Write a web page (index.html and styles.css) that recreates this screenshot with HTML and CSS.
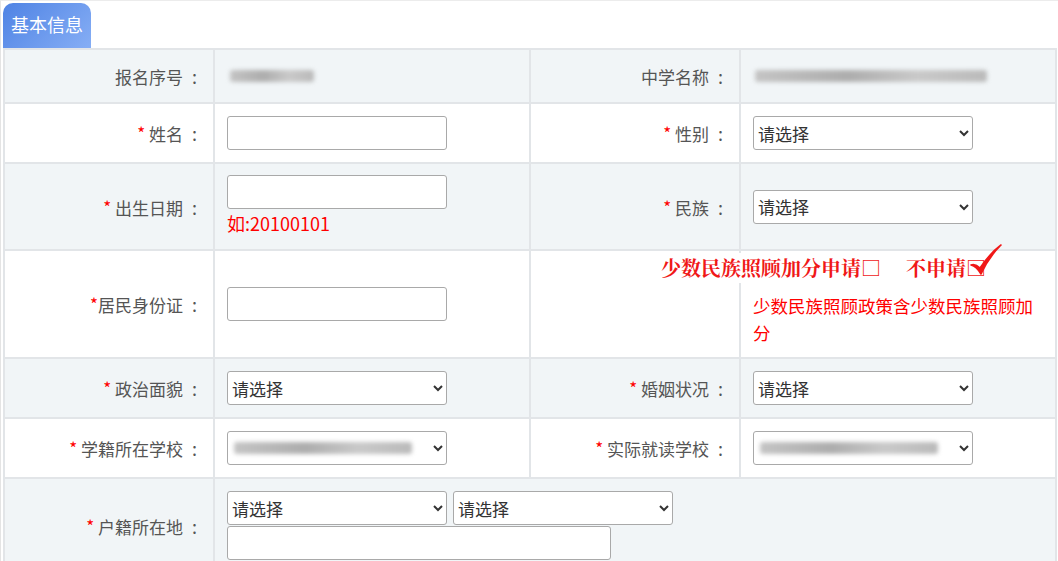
FILE: index.html
```html
<!DOCTYPE html>
<html lang="zh-CN">
<head>
    <meta charset="UTF-8">
    <meta name="viewport" content="width=device-width, initial-scale=1.0">
    <title>基本信息</title>
    <link rel="stylesheet" href="styles.css">
</head>
<body>
    <div class="panel">
        <div class="tab">基本信息</div>
        <table class="info-table">
            <colgroup>
                <col class="col-label">
                <col class="col-value">
                <col class="col-label">
                <col class="col-value">
            </colgroup>
            <tr class="row-grey row-54">
                <td class="label">报名序号<span class="colon">:</span></td>
                <td><span class="blur blur-short"></span></td>
                <td class="label">中学名称<span class="colon">:</span></td>
                <td><span class="blur blur-long"></span></td>
            </tr>
            <tr class="row-60">
                <td class="label"><span class="req">*</span> 姓名<span class="colon">:</span></td>
                <td><input class="field" type="text"></td>
                <td class="label"><span class="req">*</span> 性别<span class="colon">:</span></td>
                <td><select class="field"><option>请选择</option></select></td>
            </tr>
            <tr class="row-grey row-87">
                <td class="label"><span class="req">*</span> 出生日期<span class="colon">:</span></td>
                <td class="top-cell">
                    <input class="field" type="text">
                    <div class="hint">如:20100101</div>
                </td>
                <td class="label"><span class="req">*</span> 民族<span class="colon">:</span></td>
                <td><select class="field"><option>请选择</option></select></td>
            </tr>
            <tr class="row-108">
                <td class="label"><span class="req">*</span>居民身份证<span class="colon">:</span></td>
                <td><input class="field" type="text"></td>
                <td class="label"></td>
                <td class="ethnic-cell">
                    <div class="ethnic-apply">少数民族照顾加分申请□<span class="gap"></span>不申请□
                        <svg class="tick" width="32" height="38" viewBox="0 0 32 38">
                            <path d="M1 21 C5 22 8 25 11 30 C16 19 23 9 31 1 C23 7 16 15 10 24 C7 21 4 20 1 21 Z" fill="#f01818" stroke="#f01818" stroke-width="1.6" stroke-linejoin="round"/>
                        </svg>
                    </div>
                    <div class="note">少数民族照顾政策含少数民族照顾加分</div>
                </td>
            </tr>
            <tr class="row-grey row-60">
                <td class="label"><span class="req">*</span> 政治面貌<span class="colon">:</span></td>
                <td><select class="field"><option>请选择</option></select></td>
                <td class="label"><span class="req">*</span> 婚姻状况<span class="colon">:</span></td>
                <td><select class="field"><option>请选择</option></select></td>
            </tr>
            <tr class="row-60">
                <td class="label"><span class="req">*</span> 学籍所在学校<span class="colon">:</span></td>
                <td>
                    <div class="select-wrap">
                        <select class="field"><option></option></select>
                        <span class="blur blur-select"></span>
                    </div>
                </td>
                <td class="label"><span class="req">*</span> 实际就读学校<span class="colon">:</span></td>
                <td>
                    <div class="select-wrap">
                        <select class="field"><option></option></select>
                        <span class="blur blur-select"></span>
                    </div>
                </td>
            </tr>
            <tr class="row-grey">
                <td class="label"><span class="req">*</span> 户籍所在地<span class="colon">:</span></td>
                <td colspan="3" class="address-cell">
                    <div class="address-selects">
                        <select class="field"><option>请选择</option></select>
                        <select class="field"><option>请选择</option></select>
                    </div>
                    <input class="field field-wide" type="text">
                </td>
            </tr>
        </table>
    </div>
</body>
</html>
```

FILE: styles.css
```css
body {
    margin: 0;
    background-color: #fff;
    font-family: "Noto Sans CJK SC", "Noto Sans", sans-serif;
    color: #555;
}
.panel {
    border-top: 1px solid #ececec;
    border-left: 1px solid #e4e4e4;
    padding: 2px 0 0 2px;
}
.tab {
    width: 88px;
    height: 45px;
    line-height: 42px;
    text-align: center;
    color: #fff;
    font-size: 18px;
    border-radius: 10px 10px 0 0;
    background: linear-gradient(135deg, #4f83e4, #86aef5);
}
.info-table {
    width: 1053px;
    border-collapse: collapse;
    table-layout: fixed;
    border: 2px solid #e2e5e8;
}
.col-label {
    width: 210px;
}
.col-value {
    width: 316px;
}
.info-table td {
    border: 2px solid #e2e5e8;
    padding: 0 12px;
    vertical-align: middle;
    font-size: 17px;
}
.row-grey {
    background-color: #f1f5f7;
}
.row-54 { height: 54px; }
.row-60 { height: 60px; }
.row-87 { height: 87px; }
.row-108 { height: 108px; }
.info-table td.label {
    text-align: right;
    padding-right: 16px;
    color: #555;
    white-space: nowrap;
}
.colon {
    margin-left: 9px;
    font-size: 18px;
}
.req {
    color: #f00;
    font-size: 17px;
    position: relative;
    top: -1px;
}
.field {
    box-sizing: border-box;
    width: 220px;
    height: 34px;
    border: 1px solid #a9a9a9;
    border-radius: 3px;
    background-color: #fff;
    font-family: "Noto Sans CJK SC", sans-serif;
    font-size: 17px;
    color: #333;
    padding: 0 4px;
    margin: 0;
    vertical-align: middle;
}
select.field {
    padding: 0;
}
.top-cell {
    padding-top: 11px !important;
    vertical-align: top !important;
}
.hint {
    color: #f00;
    font-size: 18px;
    line-height: 26px;
    margin-top: 1px;
}
.blur {
    display: block;
    height: 12px;
    background: linear-gradient(to right, #c4c4c4, #adadad 40%, #c9c9c9 70%, #bababa);
    filter: blur(2px);
    border-radius: 3px;
}
.blur-short {
    width: 84px;
    margin-left: 3px;
}
.blur-long {
    width: 232px;
    margin-left: 2px;
}
.select-wrap {
    position: relative;
    width: 220px;
}
.blur-select {
    position: absolute;
    left: 7px;
    top: 11px;
    width: 178px;
}
.ethnic-cell {
    position: relative;
    vertical-align: top !important;
}
.ethnic-apply {
    position: absolute;
    left: -80px;
    top: 2px;
    height: 30px;
    padding-right: 6px;
    background-color: #fff;
    color: #f01818;
    font-family: "Noto Serif CJK SC", "Liberation Serif", serif;
    font-weight: bold;
    font-size: 20px;
    line-height: 30px;
    white-space: nowrap;
}
.gap {
    display: inline-block;
    width: 25px;
}
.tick {
    position: absolute;
    right: -10px;
    top: -9px;
}
.note {
    color: #f00;
    font-size: 17.5px;
    line-height: 27px;
    padding-top: 41px;
}
.address-cell {
    padding-top: 12px !important;
    padding-bottom: 12px !important;
}
.address-selects {
    display: flex;
    gap: 6px;
    margin-bottom: 1px;
}
.field-wide {
    width: 384px;
}
```
